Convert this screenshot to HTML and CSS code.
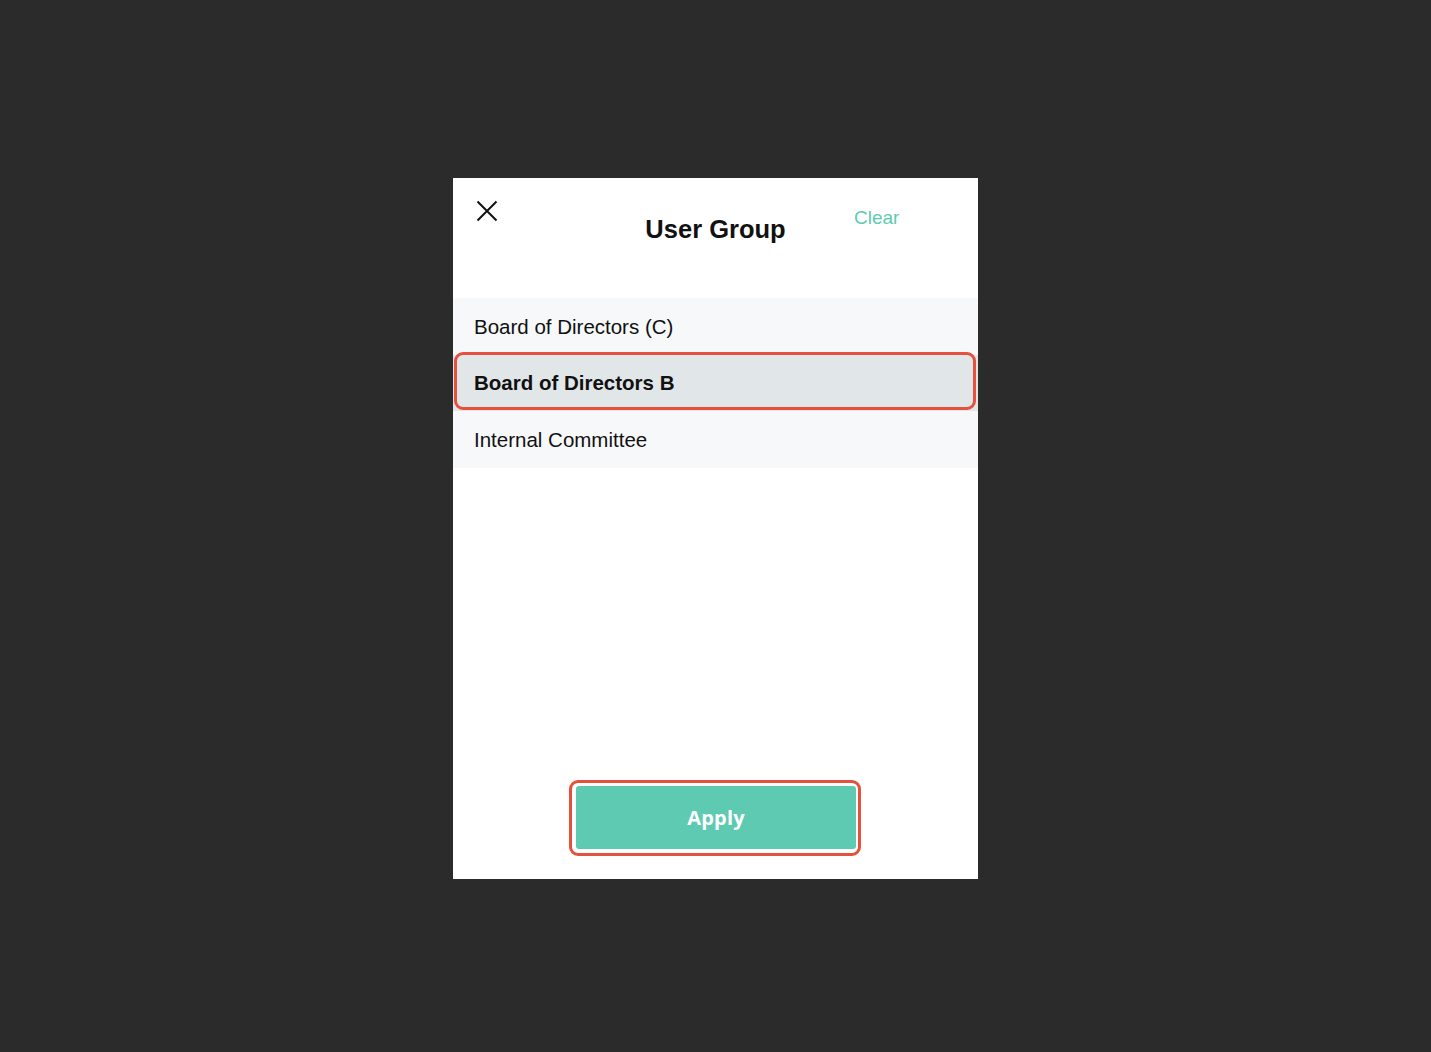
FILE: index.html
```html
<!DOCTYPE html>
<html lang="en">
<head>
<meta charset="utf-8">
<title>User Group</title>
<link rel="stylesheet" href="styles.css">
</head>
<body>
<div class="stage">
  <div class="modal">
    <div class="header">
      <button class="close" aria-label="Close">
        <svg width="22" height="22" viewBox="0 0 22 22"><path d="M1.5 1.5 L20.5 20.5 M20.5 1.5 L1.5 20.5" stroke="#111" stroke-width="2" fill="none"/></svg>
      </button>
      <h1 class="title">User Group</h1>
      <button class="clear">Clear</button>
    </div>
    <ul class="list">
      <li class="item">Board of Directors (C)</li>
      <li class="item selected">Board of Directors B</li>
      <li class="item">Internal Committee</li>
    </ul>
    <div class="spacer"></div>
    <div class="footer">
      <div class="apply-ring">
        <button class="apply">Apply</button>
      </div>
    </div>
  </div>
</div>
</body>
</html>
```
FILE: styles.css
```css
html, body {
  margin: 0;
  padding: 0;
  background: #2b2b2b;
  height: 100%;
}
body {
  font-family: "Liberation Sans", Arial, sans-serif;
}
.stage {
  height: 1052px;
  display: flex;
  justify-content: center;
  padding-top: 178px;
  box-sizing: border-box;
}
.modal {
  width: 525px;
  height: 701px;
  background: #fff;
  display: flex;
  flex-direction: column;
}
.header {
  height: 120px;
  position: relative;
  display: flex;
  justify-content: center;
}
.close {
  position: absolute;
  left: 23px;
  top: 22px;
  width: 22px;
  height: 22px;
  padding: 0;
  border: 0;
  background: none;
  display: block;
}
.close svg { display: block; }
.title {
  margin: 0;
  margin-top: 35px;
  font-size: 25.5px;
  font-weight: 700;
  color: #111;
  line-height: 32px;
  height: 32px;
}
.clear {
  position: absolute;
  left: 401px;
  top: 28px;
  padding: 0;
  border: 0;
  background: none;
  font-family: "Liberation Sans", Arial, sans-serif;
  font-size: 19px;
  line-height: 24px;
  color: #5ecbb1;
}
.list {
  list-style: none;
  margin: 0;
  padding: 0;
  background: #f7f8fa;
}
.item {
  height: 57px;
  line-height: 57px;
  padding-left: 21px;
  font-size: 20.5px;
  color: #111;
  position: relative;
}
.item:nth-child(2) { height: 56px; line-height: 56px; }
.item.selected {
  background: #e1e6e8;
  font-weight: 700;
}
.item.selected::after {
  content: "";
  position: absolute;
  left: 1px;
  right: 2px;
  top: -3px;
  bottom: 1px;
  border: 3px solid #e5513d;
  border-radius: 9px;
}
.spacer { flex: 1; }
.footer {
  display: flex;
  justify-content: center;
  padding-bottom: 23px;
}
.apply-ring {
  width: 292px;
  height: 76px;
  box-sizing: border-box;
  border: 3px solid #e5513d;
  border-radius: 9px;
  padding: 3px 2px 4px 4px;
  margin-left: -1px;
}
.apply {
  display: block;
  width: 100%;
  height: 100%;
  border: 0;
  border-radius: 3px;
  background: #5ecab2;
  color: #fff;
  font-family: "Open Sans", "Liberation Sans", sans-serif;
  font-weight: 700;
  font-size: 20px;
  letter-spacing: 0.2px;
}
```
